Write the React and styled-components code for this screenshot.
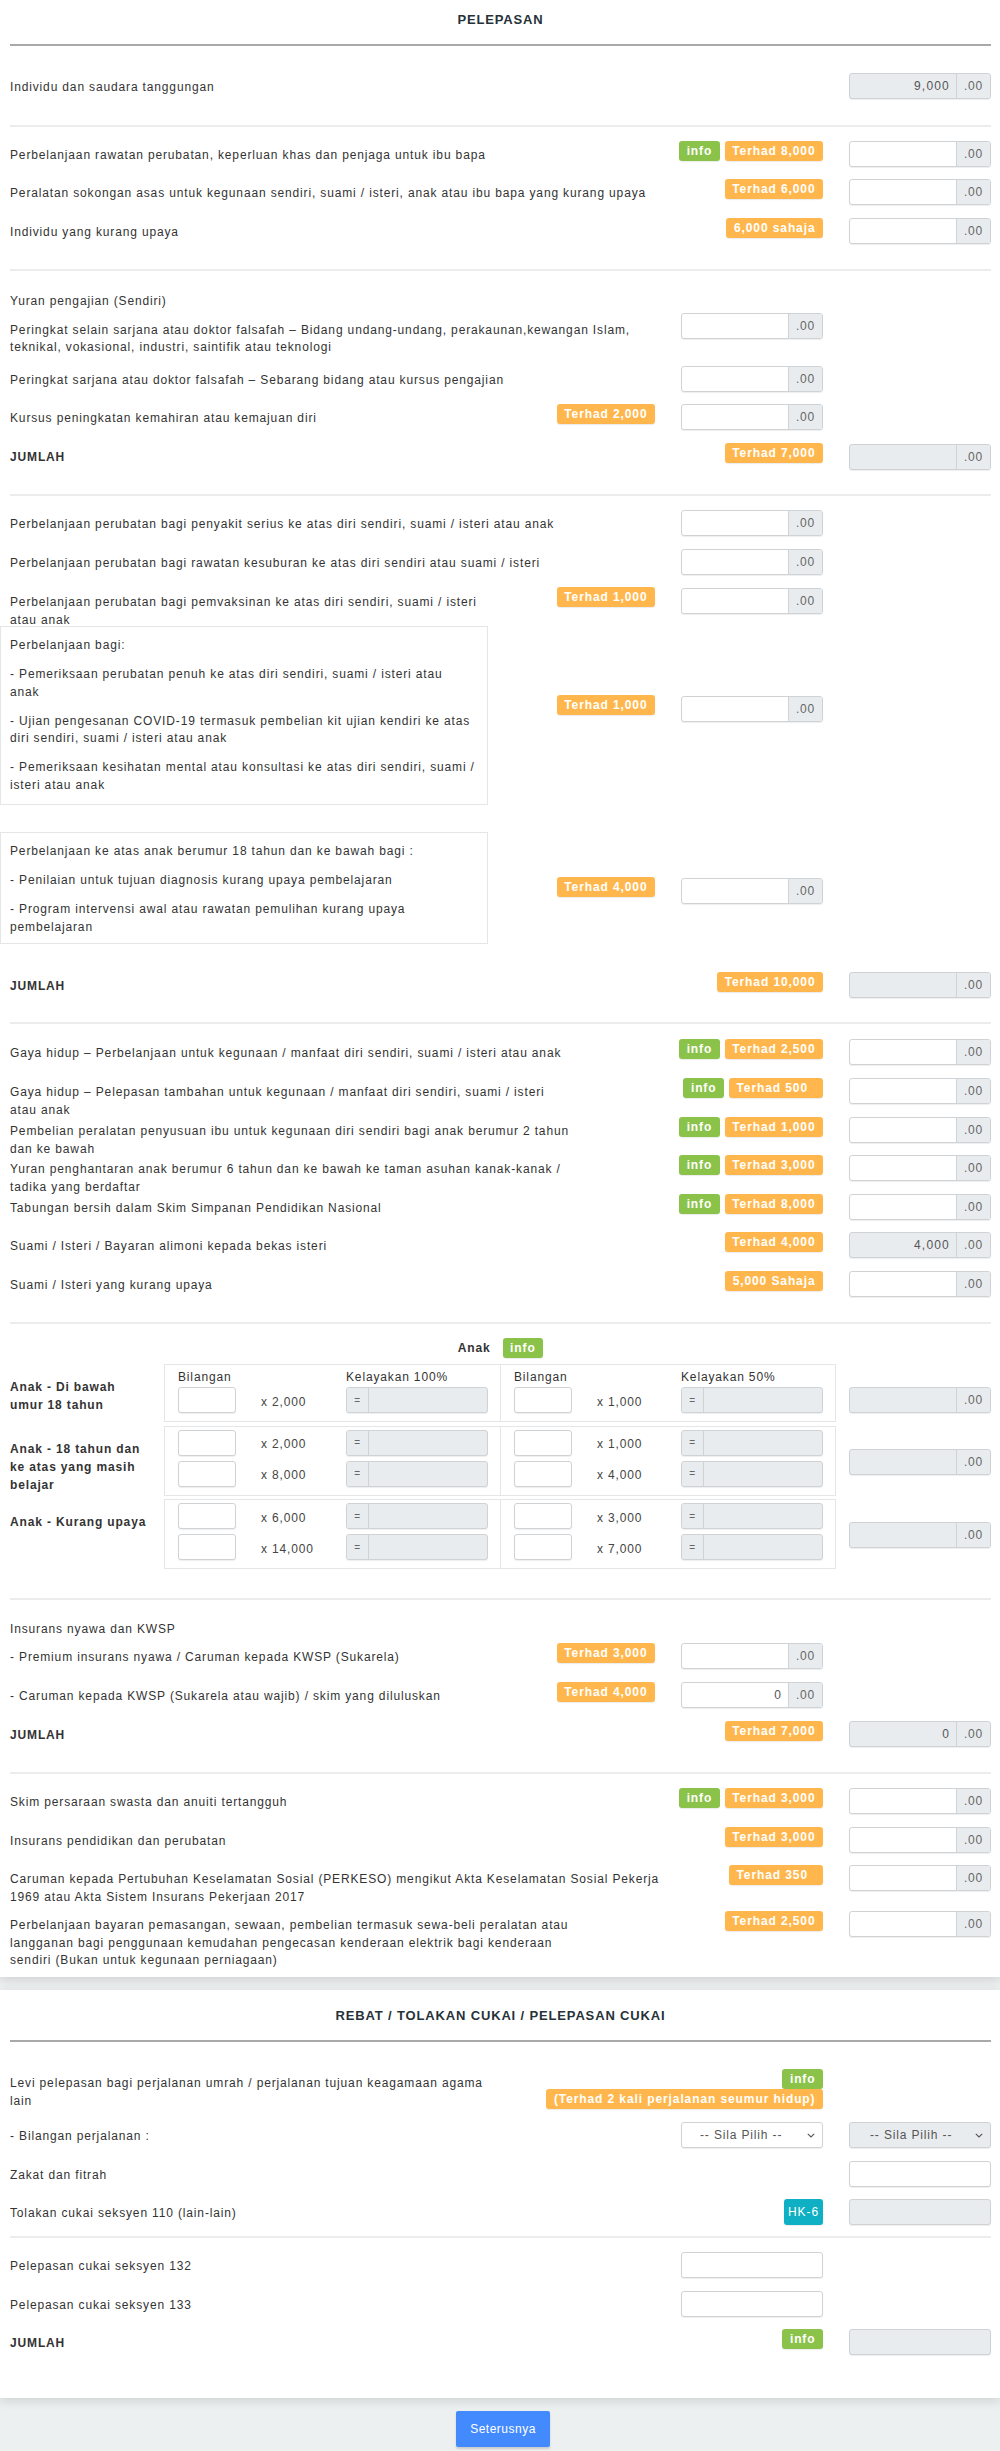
import React from 'react';
import styled, { createGlobalStyle } from 'styled-components';

const Global = createGlobalStyle`
  html, body { margin: 0; padding: 0; }
  body {
    background: #edf0f1;
    font-family: "Liberation Sans", Arial, Helvetica, sans-serif;
    font-size: 12px;
    color: #333;
    letter-spacing: 0.85px;
  }
  * { box-sizing: border-box; }
`;

const Page = styled.div`
  width: 1000px;
`;

const Card = styled.div`
  background: #fff;
  padding: 0 9px 0 10px;
  margin-top: ${p => p.$mt || 0}px;
  box-shadow: 0 3px 10px rgba(0, 0, 0, 0.13);
`;

const TitleBar = styled.div`
  height: ${p => p.$h}px;
  padding-top: ${p => p.$pt}px;
  text-align: center;
  font-weight: 700;
  font-size: 13px;
  line-height: 17px;
  color: #263238;
`;

const Rule = styled.div`
  height: 2px;
  background: ${p => (p.$thick ? '#a9a9a9' : '#ececec')};
`;

const Section = styled.div`
  padding-top: ${p => p.$pt || 0}px;
  padding-bottom: ${p => p.$pb || 0}px;
`;

const Row = styled.div`
  display: grid;
  grid-template-columns: minmax(0, 1fr) 142px 142px;
  column-gap: 26px;
  align-items: start;
  height: ${p => p.$h}px;
`;

const Main = styled.div`
  display: flex;
  justify-content: space-between;
  align-items: flex-start;
  min-width: 0;
`;

const Label = styled.div`
  padding-top: ${p => (p.$pt === undefined ? 6 : p.$pt)}px;
  line-height: 17.6px;
  white-space: nowrap;
  font-weight: ${p => (p.$bold ? 700 : 400)};
`;

const Cell = styled.div`
  grid-column: ${p => p.$col || 'auto'};
  display: flex;
  flex-direction: ${p => (p.$stack ? 'column' : 'row')};
  justify-content: flex-end;
  align-items: ${p => (p.$stack ? 'flex-end' : 'flex-start')};
  gap: ${p => (p.$stack ? 0 : 5)}px;
  margin-top: ${p => p.$mt || 0}px;
`;

const tones = { info: '#8bc34a', warn: '#ffb74d', teal: '#0fb0c4' };

const Badge = styled.span`
  display: inline-flex;
  align-items: center;
  justify-content: ${p => (p.$w ? 'flex-start' : 'center')};
  flex: none;
  height: ${p => (p.$tall ? 26 : 20)}px;
  width: ${p => (p.$w ? `${p.$w}px` : 'auto')};
  margin-top: ${p => p.$mt || 0}px;
  padding: 0 ${p => (p.$tall ? 4 : 7.5)}px;
  border-radius: 3px;
  background: ${p => tones[p.$tone]};
  color: #fff;
  font-weight: ${p => (p.$tone === 'teal' ? 400 : 700)};
  font-size: 12px;
  letter-spacing: 0.9px;
  white-space: nowrap;
  box-shadow: 0 1px 1px rgba(0, 0, 0, 0.08);
`;

const Group = styled.div`
  display: flex;
  width: ${p => p.$w || 142}px;
  height: 26px;
  border: 1px solid #cfd3d6;
  border-radius: 3px;
  overflow: hidden;
  background: ${p => (p.$ro ? '#e9ecef' : '#fff')};
  box-shadow: 0 1px 1px rgba(0, 0, 0, 0.07);
`;

const Field = styled.input`
  flex: 1;
  min-width: 0;
  border: 0;
  outline: 0;
  background: transparent;
  font: inherit;
  letter-spacing: 1.2px;
  color: #555;
  text-align: right;
  padding: 0 6px;
`;

const Addon = styled.span`
  flex: 0 0 ${p => p.$w || 34}px;
  display: flex;
  align-items: center;
  justify-content: center;
  background: #e9ecef;
  color: #666;
  font-size: ${p => (p.$small ? 10 : 12)}px;
  border-left: ${p => (p.$left ? 0 : 1)}px solid #cfd3d6;
  border-right: ${p => (p.$left ? 1 : 0)}px solid #cfd3d6;
`;

const Plain = styled.input`
  width: ${p => p.$w || 142}px;
  height: 26px;
  border: 1px solid #cfd3d6;
  border-radius: 3px;
  outline: 0;
  background: ${p => (p.$ro ? '#e9ecef' : '#fff')};
  font: inherit;
  color: #555;
  padding: 0 6px;
  box-shadow: 0 1px 1px rgba(0, 0, 0, 0.07);
`;

const SelectWrap = styled.div`
  position: relative;
  width: 142px;
  height: 26px;
`;

const Select = styled.select`
  appearance: none;
  -webkit-appearance: none;
  width: 100%;
  height: 100%;
  border: 1px solid #cfd3d6;
  border-radius: 3px;
  outline: 0;
  background: ${p => (p.$ro ? '#e9ecef' : '#fff')};
  font: inherit;
  letter-spacing: 0.85px;
  color: #555;
  opacity: 1;
  padding: 0 20px 0 ${p => (p.$ro ? 20 : 18)}px;
  box-shadow: 0 1px 1px rgba(0, 0, 0, 0.07);
`;

const Chevron = styled.svg`
  position: absolute;
  right: 8px;
  top: 11px;
  width: 8px;
  height: 5px;
  pointer-events: none;
`;

const TextBox = styled.div`
  margin-left: -10px;
  width: 488px;
  height: ${p => p.$h}px;
  border: 1px solid #e4e6e8;
  padding: 10px 14px 0 9px;
  line-height: 17.6px;
  white-space: nowrap;
  p { margin: 0 0 11.5px; }
`;

const AnakHead = styled.div`
  display: flex;
  justify-content: center;
  align-items: center;
  gap: 12px;
  height: 20px;
  margin-bottom: 6px;
  font-weight: 700;
`;

const AnakTable = styled.div`
  display: flex;
  flex-direction: column;
  gap: 3.5px;
`;

const AnakRow = styled.div`
  display: grid;
  grid-template-columns: 154px 672px 1fr;
  align-items: start;
`;

const AnakLabel = styled.div`
  padding-top: 14px;
  line-height: 18px;
  font-weight: 700;
  white-space: nowrap;
`;

const AnakBox = styled.div`
  display: grid;
  grid-template-columns: 1fr 1fr;
  border: 1px solid #e4e6e8;
`;

const Half = styled.div`
  display: grid;
  grid-template-columns: 58px 1fr 142px;
  column-gap: 25px;
  row-gap: 5px;
  align-items: center;
  padding: 3px 12px 8px 13px;
  & + & { border-left: 1px solid #e4e6e8; }
`;

const HeadText = styled.div`
  height: 14px;
  line-height: 19px;
  white-space: nowrap;
`;

const Mult = styled.div`
  padding-top: 3px;
  color: #444;
  white-space: nowrap;
`;

const TotalCell = styled.div`
  justify-self: end;
  margin-top: 23px;
`;

const Footer = styled.div`
  display: flex;
  justify-content: center;
  padding: 13px 0 4px 6px;
`;

const Button = styled.button`
  width: 94px;
  height: 36px;
  border: 0;
  border-radius: 2px;
  background: #448aff;
  color: #fff;
  font: inherit;
  letter-spacing: 0.5px;
  box-shadow: 0 2px 2px rgba(0, 0, 0, 0.15);
`;

const Money = ({ ro, value }) => (
  <Group $ro={ro}>
    <Field readOnly={ro} defaultValue={value || ''} />
    <Addon>.00</Addon>
  </Group>
);

const Eq = () => (
  <Group $ro>
    <Addon $w={22} $left $small>=</Addon>
    <Field readOnly />
  </Group>
);

const Small = () => <Plain $w={58} />;

const Pick = ({ ro }) => (
  <SelectWrap>
    <Select $ro={ro} defaultValue="">
      <option value="">-- Sila Pilih --</option>
      <option value="1">1</option>
      <option value="2">2</option>
    </Select>
    <Chevron viewBox="0 0 8 5">
      <path d="M0.8 0.8 L4 4 L7.2 0.8" fill="none" stroke="#555" strokeWidth="1.1" />
    </Chevron>
  </SelectWrap>
);

const Info = props => <Badge $tone="info" {...props}>info</Badge>;
const Warn = ({ children, ...props }) => <Badge $tone="warn" {...props}>{children}</Badge>;

const Lines = ({ lines }) =>
  lines.map((l, i) => (
    <React.Fragment key={i}>
      {i > 0 && <br />}
      {l}
    </React.Fragment>
  ));

export default function App() {
  return (
    <Page>
      <Global />
      <Card>
        <TitleBar $h={44} $pt={10.5}>PELEPASAN</TitleBar>
        <Rule $thick />

        <Section $pt={27}>
          <Row $h={52}>
            <Main><Label>Individu dan saudara tanggungan</Label></Main>
            <Cell $col={3}><Money ro value="9,000" /></Cell>
          </Row>
        </Section>
        <Rule />

        <Section $pt={14}>
          <Row $h={38}>
            <Main><Label>Perbelanjaan rawatan perubatan, keperluan khas dan penjaga untuk ibu bapa</Label></Main>
            <Cell><Info /><Warn>Terhad 8,000</Warn></Cell>
            <Cell><Money /></Cell>
          </Row>
          <Row $h={39}>
            <Main><Label>Peralatan sokongan asas untuk kegunaan sendiri, suami / isteri, anak atau ibu bapa yang kurang upaya</Label></Main>
            <Cell><Warn>Terhad 6,000</Warn></Cell>
            <Cell><Money /></Cell>
          </Row>
          <Row $h={51}>
            <Main><Label>Individu yang kurang upaya</Label></Main>
            <Cell><Warn>6,000 sahaja</Warn></Cell>
            <Cell><Money /></Cell>
          </Row>
        </Section>
        <Rule />

        <Section $pt={15.5}>
          <Row $h={26.5}>
            <Main><Label>Yuran pengajian (Sendiri)</Label></Main>
          </Row>
          <Row $h={53}>
            <Main>
              <Label $pt={8.5}>
                <Lines lines={['Peringkat selain sarjana atau doktor falsafah – Bidang undang-undang, perakaunan,kewangan Islam,', 'teknikal, vokasional, industri, saintifik atau teknologi']} />
              </Label>
            </Main>
            <Cell $col={2}><Money /></Cell>
          </Row>
          <Row $h={38}>
            <Main><Label>Peringkat sarjana atau doktor falsafah – Sebarang bidang atau kursus pengajian</Label></Main>
            <Cell $col={2}><Money /></Cell>
          </Row>
          <Row $h={40}>
            <Main>
              <Label>Kursus peningkatan kemahiran atau kemajuan diri</Label>
              <Warn>Terhad 2,000</Warn>
            </Main>
            <Cell $col={2}><Money /></Cell>
          </Row>
          <Row $h={50}>
            <Main><Label $bold $pt={4.5}>JUMLAH</Label></Main>
            <Cell><Warn $mt={-1}>Terhad 7,000</Warn></Cell>
            <Cell><Money ro /></Cell>
          </Row>
        </Section>
        <Rule />

        <Section $pt={14}>
          <Row $h={39}>
            <Main><Label>Perbelanjaan perubatan bagi penyakit serius ke atas diri sendiri, suami / isteri atau anak</Label></Main>
            <Cell $col={2}><Money /></Cell>
          </Row>
          <Row $h={39}>
            <Main><Label>Perbelanjaan perubatan bagi rawatan kesuburan ke atas diri sendiri atau suami / isteri</Label></Main>
            <Cell $col={2}><Money /></Cell>
          </Row>
          <Row $h={38}>
            <Main>
              <Label><Lines lines={['Perbelanjaan perubatan bagi pemvaksinan ke atas diri sendiri, suami / isteri', 'atau anak']} /></Label>
              <Warn $mt={-1}>Terhad 1,000</Warn>
            </Main>
            <Cell $col={2}><Money /></Cell>
          </Row>
          <Row $h={206}>
            <Main>
              <TextBox $h={179}>
                <p>Perbelanjaan bagi:</p>
                <p><Lines lines={['- Pemeriksaan perubatan penuh ke atas diri sendiri, suami / isteri atau', 'anak']} /></p>
                <p><Lines lines={['- Ujian pengesanan COVID-19 termasuk pembelian kit ujian kendiri ke atas', 'diri sendiri, suami / isteri atau anak']} /></p>
                <p><Lines lines={['- Pemeriksaan kesihatan mental atau konsultasi ke atas diri sendiri, suami /', 'isteri atau anak']} /></p>
              </TextBox>
              <Warn $mt={69}>Terhad 1,000</Warn>
            </Main>
            <Cell $col={2} $mt={70}><Money /></Cell>
          </Row>
          <Row $h={140}>
            <Main>
              <TextBox $h={112}>
                <p>Perbelanjaan ke atas anak berumur 18 tahun dan ke bawah bagi :</p>
                <p>- Penilaian untuk tujuan diagnosis kurang upaya pembelajaran</p>
                <p><Lines lines={['- Program intervensi awal atau rawatan pemulihan kurang upaya', 'pembelajaran']} /></p>
              </TextBox>
              <Warn $mt={45}>Terhad 4,000</Warn>
            </Main>
            <Cell $col={2} $mt={46}><Money /></Cell>
          </Row>
          <Row $h={50}>
            <Main><Label $bold>JUMLAH</Label></Main>
            <Cell><Warn>Terhad 10,000</Warn></Cell>
            <Cell><Money ro /></Cell>
          </Row>
        </Section>
        <Rule />

        <Section $pt={15}>
          <Row $h={39}>
            <Main><Label>Gaya hidup – Perbelanjaan untuk kegunaan / manfaat diri sendiri, suami / isteri atau anak</Label></Main>
            <Cell><Info /><Warn>Terhad 2,500</Warn></Cell>
            <Cell><Money /></Cell>
          </Row>
          <Row $h={39}>
            <Main><Label><Lines lines={['Gaya hidup – Pelepasan tambahan untuk kegunaan / manfaat diri sendiri, suami / isteri', 'atau anak']} /></Label></Main>
            <Cell><Info /><Warn $w={94}>Terhad 500</Warn></Cell>
            <Cell><Money /></Cell>
          </Row>
          <Row $h={38}>
            <Main><Label><Lines lines={['Pembelian peralatan penyusuan ibu untuk kegunaan diri sendiri bagi anak berumur 2 tahun', 'dan ke bawah']} /></Label></Main>
            <Cell><Info /><Warn>Terhad 1,000</Warn></Cell>
            <Cell><Money /></Cell>
          </Row>
          <Row $h={39}>
            <Main><Label><Lines lines={['Yuran penghantaran anak berumur 6 tahun dan ke bawah ke taman asuhan kanak-kanak /', 'tadika yang berdaftar']} /></Label></Main>
            <Cell><Info /><Warn>Terhad 3,000</Warn></Cell>
            <Cell><Money /></Cell>
          </Row>
          <Row $h={38}>
            <Main><Label>Tabungan bersih dalam Skim Simpanan Pendidikan Nasional</Label></Main>
            <Cell><Info /><Warn>Terhad 8,000</Warn></Cell>
            <Cell><Money /></Cell>
          </Row>
          <Row $h={39}>
            <Main><Label>Suami / Isteri / Bayaran alimoni kepada bekas isteri</Label></Main>
            <Cell><Warn>Terhad 4,000</Warn></Cell>
            <Cell><Money ro value="4,000" /></Cell>
          </Row>
          <Row $h={51}>
            <Main><Label>Suami / Isteri yang kurang upaya</Label></Main>
            <Cell><Warn>5,000 Sahaja</Warn></Cell>
            <Cell><Money /></Cell>
          </Row>
        </Section>
        <Rule />

        <Section $pt={14} $pb={29}>
          <AnakHead>
            <span>Anak</span>
            <Info />
          </AnakHead>
          <AnakTable>
            <AnakRow>
              <AnakLabel><Lines lines={['Anak - Di bawah', 'umur 18 tahun']} /></AnakLabel>
              <AnakBox>
                <Half>
                  <HeadText>Bilangan</HeadText><span /><HeadText>Kelayakan 100%</HeadText>
                  <Small /><Mult>x 2,000</Mult><Eq />
                </Half>
                <Half>
                  <HeadText>Bilangan</HeadText><span /><HeadText>Kelayakan 50%</HeadText>
                  <Small /><Mult>x 1,000</Mult><Eq />
                </Half>
              </AnakBox>
              <TotalCell><Money ro /></TotalCell>
            </AnakRow>
            <AnakRow>
              <AnakLabel><Lines lines={['Anak - 18 tahun dan', 'ke atas yang masih', 'belajar']} /></AnakLabel>
              <AnakBox>
                <Half>
                  <Small /><Mult>x 2,000</Mult><Eq />
                  <Small /><Mult>x 8,000</Mult><Eq />
                </Half>
                <Half>
                  <Small /><Mult>x 1,000</Mult><Eq />
                  <Small /><Mult>x 4,000</Mult><Eq />
                </Half>
              </AnakBox>
              <TotalCell><Money ro /></TotalCell>
            </AnakRow>
            <AnakRow>
              <AnakLabel>Anak - Kurang upaya</AnakLabel>
              <AnakBox>
                <Half>
                  <Small /><Mult>x 6,000</Mult><Eq />
                  <Small /><Mult>x 14,000</Mult><Eq />
                </Half>
                <Half>
                  <Small /><Mult>x 3,000</Mult><Eq />
                  <Small /><Mult>x 7,000</Mult><Eq />
                </Half>
              </AnakBox>
              <TotalCell><Money ro /></TotalCell>
            </AnakRow>
          </AnakTable>
        </Section>
        <Rule />

        <Section $pt={14.5}>
          <Row $h={28.5}>
            <Main><Label>Insurans nyawa dan KWSP</Label></Main>
          </Row>
          <Row $h={39}>
            <Main>
              <Label>- Premium insurans nyawa / Caruman kepada KWSP (Sukarela)</Label>
              <Warn>Terhad 3,000</Warn>
            </Main>
            <Cell $col={2}><Money /></Cell>
          </Row>
          <Row $h={39}>
            <Main>
              <Label>- Caruman kepada KWSP (Sukarela atau wajib) / skim yang diluluskan</Label>
              <Warn>Terhad 4,000</Warn>
            </Main>
            <Cell $col={2}><Money value="0" /></Cell>
          </Row>
          <Row $h={51}>
            <Main><Label $bold>JUMLAH</Label></Main>
            <Cell><Warn>Terhad 7,000</Warn></Cell>
            <Cell><Money ro value="0" /></Cell>
          </Row>
        </Section>
        <Rule />

        <Section $pt={14}>
          <Row $h={39}>
            <Main><Label>Skim persaraan swasta dan anuiti tertangguh</Label></Main>
            <Cell><Info /><Warn>Terhad 3,000</Warn></Cell>
            <Cell><Money /></Cell>
          </Row>
          <Row $h={38}>
            <Main><Label>Insurans pendidikan dan perubatan</Label></Main>
            <Cell><Warn>Terhad 3,000</Warn></Cell>
            <Cell><Money /></Cell>
          </Row>
          <Row $h={46}>
            <Main><Label><Lines lines={['Caruman kepada Pertubuhan Keselamatan Sosial (PERKESO) mengikut Akta Keselamatan Sosial Pekerja', '1969 atau Akta Sistem Insurans Pekerjaan 2017']} /></Label></Main>
            <Cell><Warn $w={94}>Terhad 350</Warn></Cell>
            <Cell><Money /></Cell>
          </Row>
          <Row $h={66}>
            <Main><Label><Lines lines={['Perbelanjaan bayaran pemasangan, sewaan, pembelian termasuk sewa-beli peralatan atau', 'langganan bagi penggunaan kemudahan pengecasan kenderaan elektrik bagi kenderaan', 'sendiri (Bukan untuk kegunaan perniagaan)']} /></Label></Main>
            <Cell><Warn>Terhad 2,500</Warn></Cell>
            <Cell><Money /></Cell>
          </Row>
        </Section>
      </Card>

      <Card $mt={13}>
        <TitleBar $h={50} $pt={16.5}>REBAT / TOLAKAN CUKAI / PELEPASAN CUKAI</TitleBar>
        <Rule $thick />
        <Section $pt={27}>
          <Row $h={53}>
            <Main><Label><Lines lines={['Levi pelepasan bagi perjalanan umrah / perjalanan tujuan keagamaan agama', 'lain']} /></Label></Main>
            <Cell $stack><Info /><Warn>(Terhad 2 kali perjalanan seumur hidup)</Warn></Cell>
          </Row>
          <Row $h={39}>
            <Main><Label>- Bilangan perjalanan :</Label></Main>
            <Cell><Pick /></Cell>
            <Cell><Pick ro /></Cell>
          </Row>
          <Row $h={38}>
            <Main><Label>Zakat dan fitrah</Label></Main>
            <Cell $col={3}><Plain /></Cell>
          </Row>
          <Row $h={37}>
            <Main><Label>Tolakan cukai seksyen 110 (lain-lain)</Label></Main>
            <Cell><Badge $tone="teal" $tall>HK-6</Badge></Cell>
            <Cell><Plain $ro readOnly /></Cell>
          </Row>
        </Section>
        <Rule />
        <Section $pt={14}>
          <Row $h={39}>
            <Main><Label>Pelepasan cukai seksyen 132</Label></Main>
            <Cell $col={2}><Plain /></Cell>
          </Row>
          <Row $h={38}>
            <Main><Label>Pelepasan cukai seksyen 133</Label></Main>
            <Cell $col={2}><Plain /></Cell>
          </Row>
          <Row $h={69}>
            <Main><Label $bold>JUMLAH</Label></Main>
            <Cell><Info /></Cell>
            <Cell><Plain $ro readOnly /></Cell>
          </Row>
        </Section>
      </Card>

      <Footer>
        <Button type="button">Seterusnya</Button>
      </Footer>
    </Page>
  );
}
